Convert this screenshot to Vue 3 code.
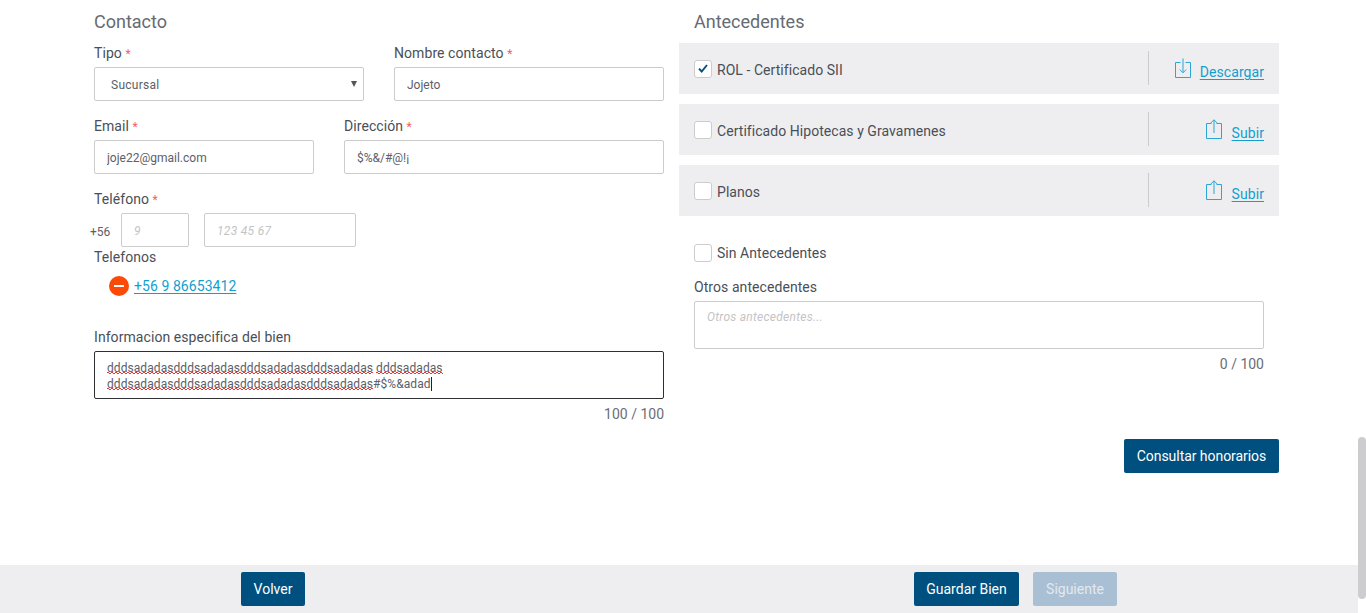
<script setup>
const docs = [
  { name: 'ROL - Certificado SII', checked: true, action: 'Descargar', down: true },
  { name: 'Certificado Hipotecas y Gravamenes', checked: false, action: 'Subir', down: false },
  { name: 'Planos', checked: false, action: 'Subir', down: false },
]
</script>

<template>
  <div class="page">
    <main class="content">
      <section class="col">
        <h2>Contacto</h2>
        <div class="row row-tipo">
          <div class="field w270">
            <label>Tipo <em>*</em></label>
            <div class="select-wrap">
              <select class="ctl sel"><option>Sucursal</option></select>
              <svg class="caret" width="6" height="6" viewBox="0 0 6 6"><path d="M0 0h6L3 6z" fill="#555"/></svg>
            </div>
          </div>
          <div class="field w270">
            <label>Nombre contacto <em>*</em></label>
            <input class="ctl" value="Jojeto" />
          </div>
        </div>
        <div class="row row-mail">
          <div class="field w220">
            <label>Email <em>*</em></label>
            <input class="ctl" value="joje22@gmail.com" />
          </div>
          <div class="field w320">
            <label>Dirección <em>*</em></label>
            <input class="ctl" value="$%&amp;/#@!¡" />
          </div>
        </div>
        <div class="field phone">
          <label>Teléfono <em>*</em></label>
          <div class="phone-row">
            <span class="prefix">+56</span>
            <input class="ctl ph-a" placeholder="9" />
            <input class="ctl ph-b" placeholder="123 45 67" />
          </div>
        </div>
        <div class="phones">
          <label>Telefonos</label>
          <div class="phone-item">
            <span class="minus"><i></i></span>
            <a>+56 9 86653412</a>
          </div>
        </div>
        <div class="field info">
          <label>Informacion especifica del bien</label>
          <div class="area focus">
            <span class="sp">dddsadadasdddsadadasdddsadadasdddsadadas</span> <span class="sp">dddsadadas</span><br />
            <span class="sp">dddsadadasdddsadadasdddsadadasdddsadadas</span>#$%&amp;adad<span class="cursor"></span>
          </div>
          <div class="count">100 / 100</div>
        </div>
      </section>

      <section class="col right">
        <h2>Antecedentes</h2>
        <div class="docs">
          <div v-for="d in docs" :key="d.name" class="doc">
            <span class="check" :class="{ on: d.checked }">
              <svg v-if="d.checked" width="10" height="9" viewBox="0 0 10 9"><path d="M1 4.600l2.700 2.900L9 1" fill="none" stroke="#00507f" stroke-width="1.900"/></svg>
            </span>
            <span class="doc-name">{{ d.name }}</span>
            <div class="doc-action" :class="{ down: d.down }">
              <svg v-if="d.down" class="ico" width="16" height="20" viewBox="0 0 16 20" fill="none" stroke="#2ba6d8">
                <path d="M5.500 4.500H.5v15h15v-15h-5"/>
                <path d="M8 .5v14M4.800 11.500L8 14.800l3.200-3.300"/>
              </svg>
              <svg v-else class="ico" width="16" height="20" viewBox="0 0 16 20" fill="none" stroke="#2ba6d8">
                <path d="M5.500 4.500H.5v15h15v-15h-5"/>
                <path d="M8 14V.8M4.800 4L8 .8 11.200 4"/>
              </svg>
              <a>{{ d.action }}</a>
            </div>
          </div>
        </div>
        <div class="sin">
          <span class="check"></span>
          <span class="doc-name">Sin Antecedentes</span>
        </div>
        <div class="field otros">
          <label>Otros antecedentes</label>
          <div class="area placeholder">Otros antecedentes...</div>
          <div class="count">0 / 100</div>
        </div>
        <div class="consult">
          <button class="btn wide">Consultar honorarios</button>
        </div>
      </section>
    </main>

    <footer class="foot">
      <button class="btn volver">Volver</button>
      <button class="btn guardar">Guardar Bien</button>
      <button class="btn disabled">Siguiente</button>
    </footer>

    <div class="scroll-thumb"></div>
  </div>
</template>

<style>
html, body { margin: 0; background: #fff; overflow: hidden; }
</style>

<style scoped>
* { box-sizing: border-box; }
.page {
  position: relative;
  width: 1366px;
  height: 613px;
  overflow: hidden;
  background: #fff;
  font-family: Roboto, "Liberation Sans", sans-serif;
  font-size: 14px;
  color: #4a4f57;
  display: flex;
  flex-direction: column;
}
.content {
  height: 565px;
  margin-left: 79px;
  width: 1200px;
  display: flex;
}
.col { width: 600px; padding: 0 15px; }
h2 {
  margin: 0;
  padding-top: 11px;
  height: 43px;
  font-size: 18px;
  line-height: 21px;
  font-weight: 400;
  color: #666b72;
}
label { display: block; font-size: 14px; line-height: 20px; color: #4a4f57; height: 20px; letter-spacing: .07px; }
em { font-style: normal; color: #f4625c; font-size: 12px; }
.row { display: flex; gap: 30px; }
.row-mail { margin-top: 15px; }
.w270 { width: 270px; }
.w220 { width: 220px; }
.w320 { width: 320px; }
.field label { margin-bottom: 4px; }
.ctl {
  display: block;
  width: 100%;
  height: 34px;
  border: 1px solid #ccc;
  border-radius: 2px;
  background: #fff;
  padding: 2px 12px 0;
  font: 12px Roboto, "Liberation Sans", sans-serif;
  color: #5c6067;
  outline: none;
}
.ctl::placeholder { color: #c4c4c4; font-style: italic; opacity: 1; letter-spacing: .3px; }
.select-wrap { position: relative; }
.sel { appearance: none; padding-left: 16px; letter-spacing: .25px; }
.caret { position: absolute; right: 7px; top: 14px; }
.phone { margin-top: 15px; }
.phone label { margin-bottom: 4px; }
.phone-row { display: flex; align-items: center; margin-left: -4px; }
.prefix { width: 31px; font-size: 12px; padding-top: 3px; color: #5c6067; }
.ph-a { width: 68px; }
.ph-b { width: 152px; margin-left: 15px; }
.phones { margin-top: 0; }
.phones label { margin-bottom: 9px; }
.phone-item { display: flex; align-items: center; gap: 5px; margin-left: 15px; height: 20px; }
.minus {
  width: 20px; height: 20px; border-radius: 50%;
  background: #fb4a06;
  display: flex; align-items: center; justify-content: center;
}
.minus i { display: block; width: 10px; height: 1.5px; background: #fff; }
a { color: #119fcf; text-decoration: underline; text-underline-offset: 2px; font-size: 14px; letter-spacing: .07px; }
.info { margin-top: 31px; }
.area {
  width: 100%;
  height: 48px;
  border: 1px solid #ccc;
  border-radius: 2px;
  padding: 8px 12px 0;
  font-size: 12px;
  line-height: 16px;
  color: #5c6067;
  white-space: nowrap;
  letter-spacing: .07px;
}
.focus { border-color: #2d2f33; }
.sp {
  background-image:
    linear-gradient(45deg, transparent 35%, #e5383b 35%, #e5383b 65%, transparent 65%),
    linear-gradient(-45deg, transparent 35%, #e5383b 35%, #e5383b 65%, transparent 65%);
  background-size: 4px 2px;
  background-repeat: repeat-x;
  background-position: 0 calc(100% - 1px), 2px calc(100% - 1px);
}
.cursor { display: inline-block; width: 1px; height: 14px; background: #222; vertical-align: -3px; }
.placeholder { color: #c4c4c4; font-style: italic; padding-top: 7px; letter-spacing: .25px; }
.count { text-align: right; line-height: 16px; margin-top: 7px; color: #6a6e75; font-size: 14px; }
.doc {
  display: flex;
  align-items: center;
  width: 600px;
  height: 51px;
  margin-left: -15px;
  margin-bottom: 10px;
  padding: 0 15px;
  background: #eeeef0;
}
.check {
  width: 18px; height: 18px;
  flex: none;
  background: #fff;
  border: 1px solid #ccc;
  border-radius: 3px;
  display: flex; align-items: center; justify-content: center;
}
.doc-name { margin: 2px 0 0 5px; font-size: 14px; color: #4a4f57; letter-spacing: .05px; }
.doc-action {
  margin-left: auto;
  align-self: flex-start;
  margin-top: 8px;
  width: 116px;
  height: 34px;
  border-left: 1px solid #ccc;
  display: flex;
  align-items: flex-start;
  justify-content: flex-end;
  gap: 10px;
  padding-top: 7px;
}
.doc-action.down { gap: 9px; }
.doc-action a { margin-top: 6px; line-height: 16px; }
.ico { flex: none; }
.sin { display: flex; align-items: center; margin-top: 28px; height: 18px; }
.sin .doc-name { margin-top: 0; }
.otros { margin-top: 15px; }
.consult { display: flex; justify-content: flex-end; margin: 67px -15px 0 0; }
.btn {
  height: 34px;
  border: 0;
  border-radius: 2px;
  background: #00507f;
  color: #fff;
  font: 14px Roboto, "Liberation Sans", sans-serif;
  padding: 0;
  white-space: nowrap;
}
.wide { width: 155px; letter-spacing: -.05px; }
.foot {
  height: 48px;
  width: 1358px;
  background: #eeeef0;
  display: flex;
  align-items: flex-start;
  padding: 7px 0 0 241px;
}
.volver { width: 64px; }
.guardar { width: 105px; margin-left: 609px; }
.disabled { width: 84px; margin-left: 14px; background: #a9bfd3; color: #e3e9ef; }
.scroll-thumb {
  position: absolute;
  right: 0; top: 437px;
  width: 8px; height: 162px;
  border-radius: 4px;
  background: #cdcdcf;
}
</style>
